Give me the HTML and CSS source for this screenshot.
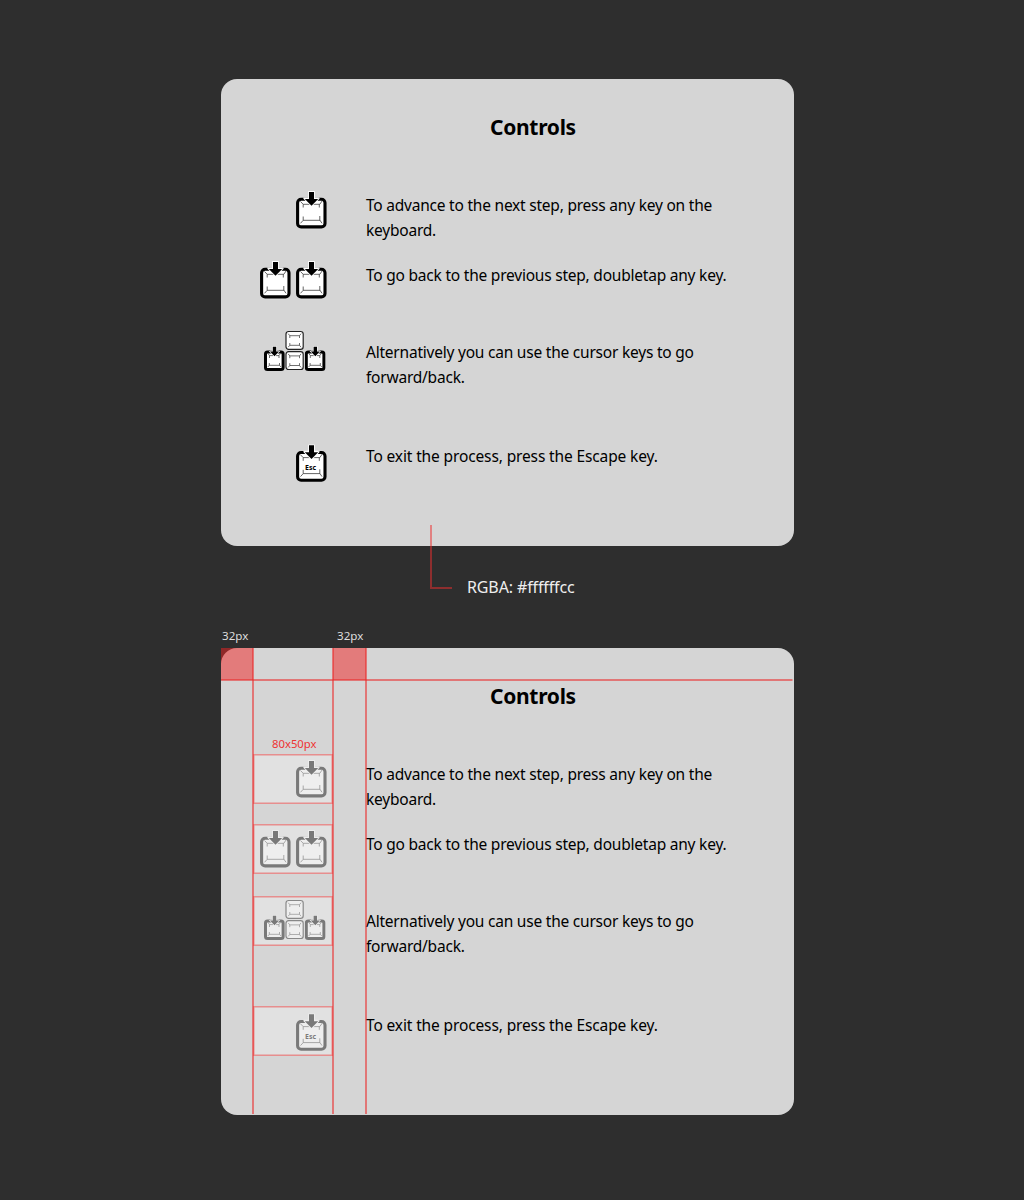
FILE: index.html
```html
<!DOCTYPE html>
<html lang="en">
<head>
<meta charset="utf-8">
<title>Controls</title>
<link rel="stylesheet" href="styles.css">
</head>
<body>
<svg class="defs" aria-hidden="true">
  <symbol id="key" viewBox="0 0 31 38">
    <rect x="1.6" y="8.2" width="27.4" height="27.7" rx="3.5" fill="#fff" stroke="#000" stroke-width="3.1"/>
    <path d="M7.2 6.4H23.4L20 11H11Z" fill="#fff"/>
    <path d="M4.5 10.5 7.2 13.3H14M7.2 13.3V16.5M17 13.3H23.8L26.3 9.7M23.3 13.3V16.5M4.5 32.3 7.2 29.3V25.5M7.2 29.3H24M26 32.3 23.8 29V25" fill="none" stroke="#333" stroke-width=".75"/>
    <path d="M13 .9H18V8H22.2L15.5 14.7 8.8 8H13Z" fill="#000" stroke="#fff" stroke-width="1.6" paint-order="stroke"/>
  </symbol>
  <symbol id="small-key" viewBox="0 0 21 26">
    <rect x="1.5" y="6" width="17.6" height="17.6" rx="2" fill="#fff" stroke="#000" stroke-width="3"/>
    <path d="M6 4.5H15L12.5 7.4H8.5Z" fill="#fff"/>
    <path d="M4 7.5 5.5 9.6H9M12 9.6H15L16.5 7.5M5.5 9.6V12M15 9.6V12M3.8 21 5.3 19.3H15.5L17 21M5.3 19.3V17M15.5 19.3V17" fill="none" stroke="#333" stroke-width=".7"/>
    <path d="M8.8 .7H12.2V5.5H15L10.5 10.2 6 5.5H8.8Z" fill="#000" stroke="#fff" stroke-width="1.1" paint-order="stroke"/>
  </symbol>
  <symbol id="plain" viewBox="0 0 20 21">
    <rect x="1" y="1" width="17.2" height="17.8" rx="2.6" fill="#fff" stroke="#222" stroke-width="1.2"/>
    <path d="M3.2 3.2 4.8 5.2H14.5L16 3.2M4.8 5.2V7.5M14.5 5.2V7.5M3.2 16.7 4.8 14.8H14.5L16 16.7M4.8 14.8V12.5M14.5 14.8V12.5" fill="none" stroke="#333" stroke-width=".7"/>
  </symbol>
</svg>
<main class="page">
  <section class="card">
    <h2 class="title">Controls</h2>
    <div class="row"><div class="icon"><svg viewBox="0 0 80 50"><use href="#key" x="43" y="6" width="31" height="38"/></svg></div><p>To advance to the next step, press any key on the<br>keyboard.</p></div>
    <div class="row back"><div class="icon"><svg viewBox="0 0 80 50"><use href="#key" x="7" y="6" width="31" height="38"/><use href="#key" x="43" y="6" width="31" height="38"/></svg></div><p>To go back to the previous step, doubletap any key.</p></div>
    <div class="row cursor"><div class="icon"><svg viewBox="0 0 80 50"><use href="#plain" x="32" y="3.5" width="20" height="21"/><use href="#plain" x="32" y="23.7" width="20" height="21"/><use href="#small-key" x="11" y="19" width="21" height="26"/><use href="#small-key" x="51.8" y="19" width="21" height="26"/></svg></div><p>Alternatively you can use the cursor keys to go<br>forward/back.</p></div>
    <div class="row exit"><div class="icon"><svg viewBox="0 0 80 50"><use href="#key" x="43" y="7.3" width="31" height="38"/><text x="57.5" y="33" class="esc">Esc</text></svg></div><p>To exit the process, press the Escape key.</p></div>
    <div class="callout"></div>
  </section>
  <div class="color-note">RGBA: #ffffffcc</div>
  <div class="measures"><span>32px</span><span>32px</span></div>
  <section class="card spec">
    <h2 class="title">Controls</h2>
    <div class="row"><div class="icon"><svg viewBox="0 0 80 50"><use href="#key" x="43" y="6" width="31" height="38"/></svg><span class="size">80x50px</span></div><p>To advance to the next step, press any key on the<br>keyboard.</p></div>
    <div class="row back"><div class="icon"><svg viewBox="0 0 80 50"><use href="#key" x="7" y="6" width="31" height="38"/><use href="#key" x="43" y="6" width="31" height="38"/></svg></div><p>To go back to the previous step, doubletap any key.</p></div>
    <div class="row cursor"><div class="icon"><svg viewBox="0 0 80 50"><use href="#plain" x="32" y="3.5" width="20" height="21"/><use href="#plain" x="32" y="23.7" width="20" height="21"/><use href="#small-key" x="11" y="19" width="21" height="26"/><use href="#small-key" x="51.8" y="19" width="21" height="26"/></svg></div><p>Alternatively you can use the cursor keys to go<br>forward/back.</p></div>
    <div class="row exit"><div class="icon"><svg viewBox="0 0 80 50"><use href="#key" x="43" y="7.3" width="31" height="38"/><text x="57.5" y="33" class="esc">Esc</text></svg></div><p>To exit the process, press the Escape key.</p></div>
    <svg class="guides" viewBox="0 0 573 467">
      <path d="M0 0H32V32H0ZM112 0H145V32H112Z" class="margin"/>
      <path d="M32 0V466" class="guide"/><path d="M112 0V466" class="guide"/><path d="M145 0V466" class="guide"/><path d="M0 32H571.5" class="guide"/>
    </svg>
  </section>
</main>
</body>
</html>
```
FILE: styles.css
```css
* { box-sizing: border-box; }
body { margin: 0; background: #2e2e2e; color: #000; font: 16px/25px "Noto Sans", sans-serif; }
.defs { position: absolute; width: 0; height: 0; }
.page { height: 1200px; padding: 79px 0 0 221px; }
.card { position: relative; width: 573px; height: 467px; padding: 32px 0 0 32px; border-radius: 16px; background: #d5d5d5; }
.title { margin: 0 0 42px 237px; font-size: 21px; line-height: 32px; font-weight: 700; letter-spacing: -.3px; }
.row { display: grid; grid-template-columns: 80px 1fr; column-gap: 33px; height: 70px; }
.row.back { height: 72px; }
.row.cursor { height: 110px; }
.icon { position: relative; width: 80px; height: 50px; }
.icon svg { display: block; width: 80px; height: 50px; overflow: visible; }
.row p { margin: 0; padding-top: 8px; font-size: 15.5px; letter-spacing: -.22px; white-space: nowrap; }
.row.cursor p { padding-top: 13px; }
.row.exit p { padding-top: 7px; letter-spacing: -.13px; }
.esc { font: 700 7px "Noto Sans", sans-serif; text-anchor: middle; }
.callout { position: absolute; left: 209px; top: 446px; width: 22px; height: 64px; border: solid rgba(238, 45, 45, .5); border-width: 0 0 2px 2px; }
.color-note { margin: 29px 0 0 246px; color: #eee; letter-spacing: -.12px; }
.measures { display: flex; gap: 89px; height: 48px; padding: 23px 0 0 1px; color: #ddd; font-size: 11.6px; line-height: 26px; }
.measures span { width: 26px; }
.spec .icon svg { opacity: .46; }
.spec .icon { background: #e1e1e1; box-shadow: inset 0 0 0 1.5px rgba(238, 60, 60, .5); }
.size { position: absolute; left: 19px; top: -23px; color: #ee3333; font-size: 11.3px; }
.guides { position: absolute; inset: 0; width: 573px; height: 467px; }
.margin { fill: rgba(241, 34, 34, .5); }
.guide { fill: none; stroke: rgba(235, 40, 40, .55); stroke-width: 2; }
```
